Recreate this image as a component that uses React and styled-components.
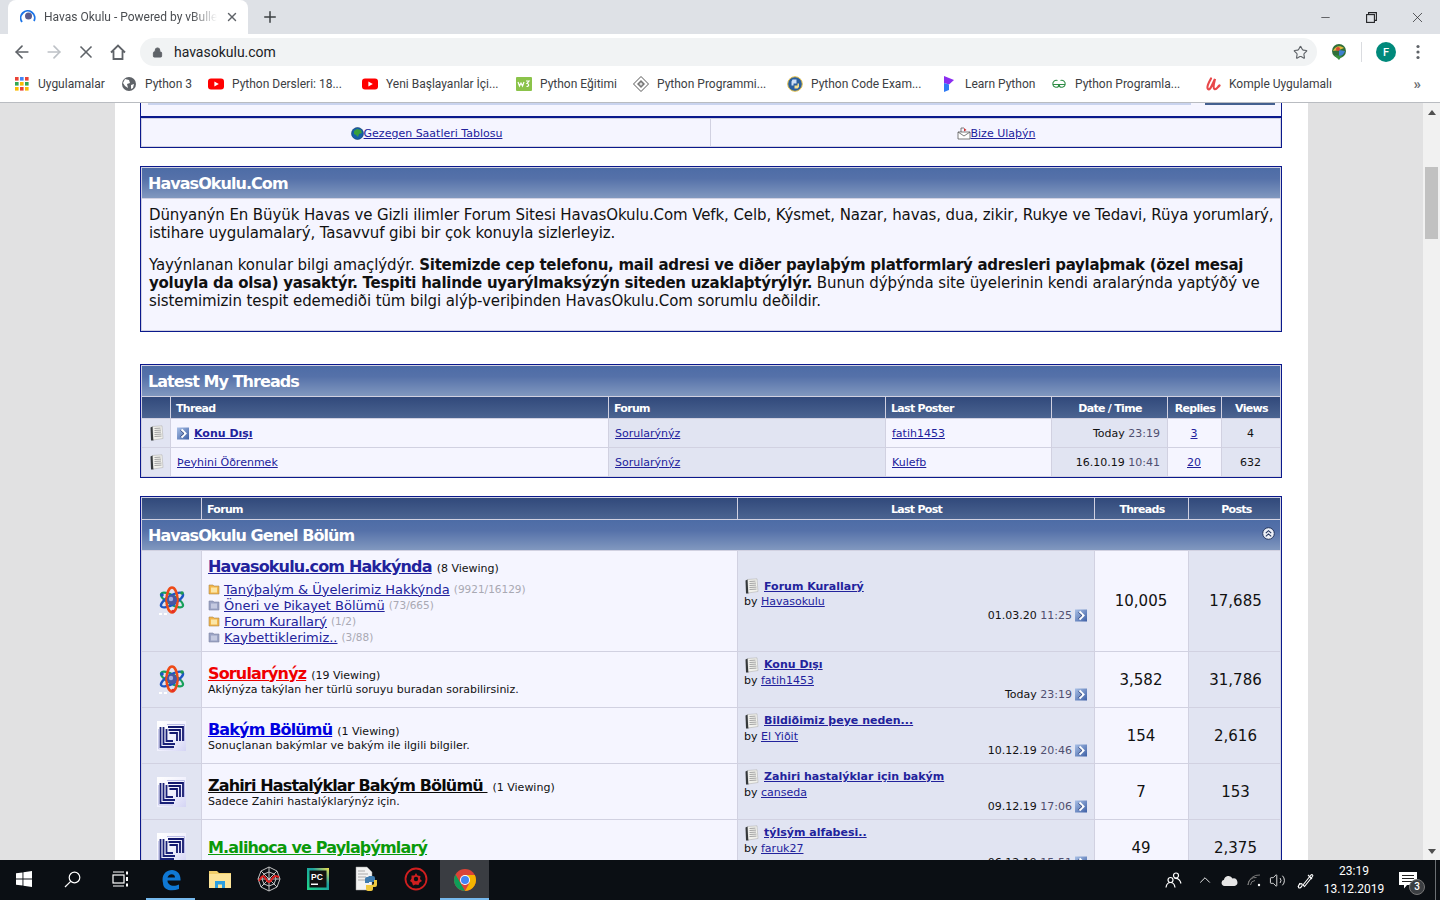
import React from 'react';
import styled, { createGlobalStyle } from 'styled-components';
import { ArrowLeft, ArrowRight, X, Plus, Lock, Star, ChevronUp, Volume2, Minus } from 'lucide-react';

const GlobalStyle = createGlobalStyle`
    html, body {
        margin: 0;
        padding: 0;
        height: 100%;
        overflow: hidden;
    }
    * { box-sizing: border-box; }
`;

const Screen = styled.div`
    width: 1440px;
    height: 900px;
    display: flex;
    flex-direction: column;
    overflow: hidden;
    font-family: "DejaVu Sans", Verdana, sans-serif;
`;

/* browser chrome */
const TabStrip = styled.div`
    height: 34px;
    background: #dee1e6;
    display: flex;
    align-items: flex-end;
    padding-left: 8px;
    font-family: Roboto, sans-serif;
`;

const Tab = styled.div`
    width: 240px;
    height: 34px;
    background: #fff;
    border-radius: 8px 8px 0 0;
    display: flex;
    align-items: center;
    padding: 0 9px 0 12px;
    gap: 8px;
    font-size: 12px;
    color: #4a4d51;
`;

const TabTitle = styled.div`
    flex: 1;
    white-space: nowrap;
    overflow: hidden;
    mask-image: linear-gradient(to right, #000 85%, transparent);
`;

const NewTab = styled.div`
    width: 44px;
    height: 34px;
    display: flex;
    align-items: center;
    justify-content: center;
    color: #3c4043;
`;

const WindowButtons = styled.div`
    margin-left: auto;
    display: flex;
    height: 34px;
`;

const WindowButton = styled.div`
    width: 46px;
    height: 34px;
    display: flex;
    align-items: center;
    justify-content: center;
    color: #202124;
`;

const Toolbar = styled.div`
    height: 36px;
    background: #fff;
    display: flex;
    align-items: center;
    padding: 0 6px;
    font-family: Roboto, sans-serif;
`;

const NavIcon = styled.div`
    width: 32px;
    height: 32px;
    display: flex;
    align-items: center;
    justify-content: center;
    color: ${p => p.$off ? '#bdc1c6' : '#5f6368'};
`;

const Omnibox = styled.div`
    width: 1178px;
    height: 28px;
    margin-left: 6px;
    background: #f1f3f4;
    border-radius: 14px;
    display: flex;
    align-items: center;
    padding: 0 9px 0 12px;
    gap: 11px;
    font-size: 14px;
    color: #202124;
    margin-right: 6px;
`;

const Url = styled.div`
    flex: 1;
`;

const ToolDivider = styled.div`
    width: 1px;
    height: 20px;
    background: #dadce0;
    margin: 0 8px 0 6px;
`;

const Avatar = styled.div`
    width: 20px;
    height: 20px;
    border-radius: 50%;
    background: #00897b;
    color: #fff;
    font-size: 11px;
    font-weight: 500;
    display: flex;
    align-items: center;
    justify-content: center;
    margin: 0 6px;
`;

const Bookmarks = styled.div`
    height: 33px;
    background: #fff;
    border-bottom: 1px solid #b9bcc1;
    display: flex;
    align-items: center;
    padding: 0 14px 4px;
    font-family: Roboto, sans-serif;
    font-size: 12px;
    color: #3c4043;
`;

const Bookmark = styled.div`
    width: ${p => p.$w}px;
    flex: none;
    display: flex;
    align-items: center;
    gap: 8px;
    white-space: nowrap;
    overflow: hidden;
`;

const MoreBookmarks = styled.div`
    margin-left: auto;
    margin-right: 5px;
    font-size: 15px;
    color: #6a6d71;
    font-weight: 700;
`;

/* page area */
const Viewport = styled.div`
    flex: 1;
    min-height: 0;
    display: grid;
    grid-template-columns: 115px 1193px 115px 17px;
    background: #e1e1e2;
    overflow: hidden;
`;

const Wrapper = styled.div`
    grid-column: 2;
    background: #fff;
    padding: 0 26px 0 25px;
    overflow: hidden;
`;

const Scrollbar = styled.div`
    grid-column: 4;
    background: #f1f1f1;
    display: flex;
    flex-direction: column;
    align-items: center;
    height: 757px;
`;

const ScrollArrow = styled.div`
    width: 0;
    height: 0;
    border-left: 4px solid transparent;
    border-right: 4px solid transparent;
    ${p => p.$down
        ? 'border-top: 5px solid #505050; margin-top: auto; margin-bottom: 6px;'
        : 'border-bottom: 5px solid #505050; margin-top: 7px;'}
`;

const ScrollThumb = styled.div`
    width: 13px;
    height: 72px;
    margin-top: 52px;
    background: #c1c1c1;
`;

const TopFragment = styled.div`
    height: 13px;
    background: #f5f5ff;
    border-left: 1px solid #0b198c;
    border-right: 1px solid #0b198c;
    display: flex;
    justify-content: space-between;
    padding: 0 6px 0 7px;
`;

const CutInput = styled.div`
    width: 1043px;
    height: 2px;
    background: #c9d3ee;
`;

const CutButton = styled.div`
    width: 70px;
    height: 2px;
    background: #44608f;
`;

const NavBox = styled.div`
    display: grid;
    grid-template-columns: 568px 1fr;
    gap: 1px;
    padding: 1px;
    height: 32px;
    background: #d1d1e1;
    border: 1px solid #0b198c;
    border-top-width: 2px;
`;

const NavCell = styled.div`
    background: #f5f5ff;
    display: flex;
    align-items: center;
    justify-content: center;
    font-size: 11px;
    padding: 1px 0 0 1px;
`;

const Link = styled.a`
    color: ${p => p.$color || '#22229c'};
    text-decoration: underline;
    font-weight: ${p => p.$bold ? 700 : 400};
    font-size: ${p => p.$size ? p.$size + 'px' : 'inherit'};
    display: inline;
`;

const NavLink = styled(Link)`
    display: inline-flex;
    align-items: center;
`;

const Box = styled.div`
    display: grid;
    grid-template-columns: ${p => p.$cols};
    gap: 1px;
    padding: 1px;
    margin-top: ${p => p.$top}px;
    background: #d1d1e1;
    border: 1px solid #0b198c;
`;

const Title = styled.div`
    grid-column: 1 / -1;
    height: 30px;
    background: linear-gradient(#4d6ca6 0%, #5571a9 35%, #8198bf 100%);
    color: #fff;
    font-weight: 700;
    font-size: 16px;
    letter-spacing: -0.95px;
    display: flex;
    align-items: center;
    justify-content: space-between;
    padding: 0 6px 0 6px;
`;

const CollapseIcon = styled.div`
    width: 13px;
    height: 13px;
    margin-top: -4px;
    margin-right: -1px;
    display: flex;
`;

const InfoBody = styled.div`
    grid-column: 1 / -1;
    height: 131px;
    background: #f5f5ff;
    padding: 7px 6px 0 7px;
    font-size: 15px;
    line-height: 18px;
    letter-spacing: -0.1px;
    color: #111;
    p { margin: 0 0 14px; }
    b { letter-spacing: -0.27px; }
`;

const Head = styled.div`
    height: 21px;
    background: linear-gradient(#31497b, #4b6491);
    color: #fff;
    font-size: 11px;
    font-weight: 700;
    letter-spacing: -0.7px;
    display: flex;
    align-items: center;
    padding: 1px 4px 0 ${p => p.$nudge ? 8 : 5}px;
    justify-content: ${p => p.$center ? 'center' : 'flex-start'};
`;

const Cell = styled.div`
    height: ${p => p.$h}px;
    background: ${p => p.$alt ? '#e1e4f2' : '#f5f5ff'};
    font-size: ${p => p.$size || 11}px;
    color: ${p => p.$color || '#111'};
    display: flex;
    align-items: center;
    padding: 0 7px 0 ${p => p.$nudge ? 9 : 6}px;
    justify-content: ${p => p.$align || 'flex-start'};
    gap: 4px;
    white-space: nowrap;
    overflow: hidden;
`;

const IconCell = styled(Cell)`
    padding: 0;
    justify-content: center;
`;

const Time = styled.span`
    color: #4f4f70;
`;

const ForumInfo = styled.div`
    display: flex;
    flex-direction: column;
    white-space: nowrap;
    padding-top: 1px;
`;

const ForumHeading = styled.div`
    display: flex;
    align-items: baseline;
    gap: 5px;
    height: 18px;
    line-height: 18px;
`;

const ForumName = styled.a`
    color: ${p => p.$color};
    font-size: 16px;
    font-weight: 700;
    text-decoration: underline;
    letter-spacing: -0.85px;
    white-space: pre;
`;

const Viewing = styled.span`
    font-size: 11px;
    color: #111;
`;

const Description = styled.div`
    font-size: 11px;
    line-height: 12px;
    margin-top: 1px;
    color: #111;
`;

const SubList = styled.div`
    display: flex;
    flex-direction: column;
    margin-top: 5px;
`;

const SubForum = styled.div`
    display: flex;
    align-items: center;
    height: 16px;
    gap: 4px;
`;

const Counts = styled.span`
    color: #a9a9b3;
    font-size: 10.5px;
`;

const LastPostInfo = styled.div`
    width: 100%;
    display: flex;
    flex-direction: column;
    font-size: 11px;
`;

const LastTitle = styled.div`
    display: flex;
    align-items: center;
    gap: 5px;
    height: 16px;
`;

const LastBy = styled.div`
    height: 15px;
    line-height: 16px;
`;

const LastDate = styled.div`
    align-self: flex-end;
    display: flex;
    align-items: center;
    gap: 3px;
    height: 13px;
    margin-bottom: 2px;
    margin-right: -1px;
`;

/* taskbar */
const Taskbar = styled.div`
    height: 40px;
    background: #0b0f14;
    display: flex;
    align-items: stretch;
    color: #fff;
    font-family: Roboto, sans-serif;
`;

const TaskSlot = styled.div`
    width: ${p => p.$w || 48}px;
    display: flex;
    align-items: center;
    justify-content: center;
    background: ${p => p.$active ? '#3a3d42' : 'transparent'};
    border-bottom: 2px solid ${p => p.$open ? '#76b9ed' : 'transparent'};
    padding-top: ${p => p.$open ? 2 : 0}px;
`;

const PinnedGap = styled.div`
    width: 2px;
`;

const Tray = styled.div`
    margin-left: auto;
    display: flex;
    align-items: center;
`;

const TrayIcon = styled.div`
    width: ${p => p.$w}px;
    display: flex;
    align-items: center;
    justify-content: center;
`;

const Clock = styled.div`
    width: 62px;
    text-align: center;
    font-size: 12px;
    line-height: 18px;
    margin-left: 1px;
`;

const Notification = styled.div`
    position: relative;
    width: 46px;
    display: flex;
    justify-content: center;
`;

const NotifyBadge = styled.div`
    position: absolute;
    right: 6px;
    top: 7px;
    width: 16px;
    height: 16px;
    border-radius: 50%;
    background: #3b3e42;
    border: 1px solid #777;
    font-size: 10px;
    font-weight: 500;
    display: flex;
    align-items: center;
    justify-content: center;
`;

const DesktopPeek = styled.div`
    align-self: stretch;
    width: 5px;
    border-left: 1px solid #6b6f73;
    margin-left: 4px;
`;

/* drawings */
const PaperIcon = ({ size = 15 }) => (
    <svg width={size} height={size + 1} viewBox="0 0 15 16" style={{ flex: 'none' }}>
        <path d="M3.500 1.500L13 .8l1 12.700-10 1.500z" fill="#f1f1ec" stroke="#b4b4b4" strokeWidth=".6" />
        <path d="M1.500 2.500L3.500 1.500 4.200 14 4.500 15.500 2 15.500z" fill="#34383a" />
        <path d="M5.500 3.500l6-.4M5.500 5.500l6.500-.4M5.500 7.500l6.500-.4M5.500 9.500l7-.4M5.500 11.500l7-.4" stroke="#a4a4a4" strokeWidth="1" />
    </svg>
);

const GoArrow = () => (
    <svg width="13" height="13" viewBox="0 0 13 13" style={{ flex: 'none' }}>
        <defs>
            <linearGradient id="goFill" x1="0" y1="0" x2="1" y2="1">
                <stop offset="0" stopColor="#a9c0e6" />
                <stop offset="1" stopColor="#3d5fa5" />
            </linearGradient>
        </defs>
        <rect width="12" height="12" y=".5" fill="url(#goFill)" />
        <path d="M4.500 2.500L8.500 6.500 4.500 10.500" fill="none" stroke="#fff" strokeWidth="2" />
        <path d="M3.400 3.400L7 6.500 3.400 9.600" fill="none" stroke="#1b2d63" strokeWidth=".7" />
    </svg>
);

const Atom = () => (
    <svg width="28" height="30" viewBox="0 0 28 30">
        <ellipse cx="14" cy="14" rx="12.500" ry="4.500" fill="none" stroke="#17a05a" strokeWidth="2.200" transform="rotate(30 14 14)" />
        <ellipse cx="14" cy="14" rx="12.500" ry="4.500" fill="none" stroke="#1c55c4" strokeWidth="2.400" transform="rotate(-30 14 14)" />
        <ellipse cx="14" cy="14" rx="5.500" ry="12.500" fill="none" stroke="#ee4a17" strokeWidth="2.600" />
        <circle cx="14" cy="14" r="5" fill="#4a57a3" />
        <circle cx="13" cy="13" r="2.200" fill="#a4aee0" />
        <circle cx="15" cy="25.500" r="1.800" fill="#e53027" />
        <circle cx="24" cy="7" r="1.800" fill="#1d9a4f" />
        <circle cx="4" cy="9" r="1.800" fill="#1c55c4" />
        <path d="M1 28h3M6 28h3" stroke="#fff" strokeWidth="2" />
    </svg>
);

const Brackets = () => (
    <svg width="29" height="30" viewBox="0 0 29 30">
        <defs>
            <linearGradient id="brk" x1="0" y1="0" x2="1" y2="1">
                <stop offset="0" stopColor="#ffffff" />
                <stop offset=".55" stopColor="#f0f0fd" />
                <stop offset="1" stopColor="#d4d4f4" />
            </linearGradient>
        </defs>
        <rect width="29" height="30" fill="url(#brk)" />
        <path d="M10 3.500h17.500V20" fill="none" stroke="#b9bbe6" strokeWidth="1" />
        <path d="M11 6h15v14M11.500 9h11.500v11M12.500 12h7.500v8" fill="none" stroke="#13186e" strokeWidth="1.800" />
        <path d="M3.500 6v20H17M6.500 6v17H18M9.500 8v12H16" fill="none" stroke="#1a2078" strokeWidth="1.800" />
        <path d="M1.500 8v20H16" fill="none" stroke="#c9caec" strokeWidth="1" />
    </svg>
);

const Folder = ({ on }) => (
    <svg width="12" height="12" viewBox="0 0 12 12" style={{ flex: 'none' }}>
        <path d="M1 2h4l1 1h5v8H1z" fill={on ? '#f3b64a' : '#9ba3c4'} stroke={on ? '#a8874f' : '#7f86a6'} strokeWidth=".6" />
        <rect x="3" y="4.500" width="6" height="5" fill={on ? '#fbe6a8' : '#c4c9e0'} />
    </svg>
);

const Globe = () => (
    <svg width="13" height="13" viewBox="0 0 13 13" style={{ flex: 'none' }}>
        <circle cx="6.500" cy="6.500" r="6" fill="#1660a8" stroke="#103b6a" strokeWidth=".6" />
        <path d="M3 4l3-2 4 1 1 3-3 1-1 3-2-2-2-1z" fill="#3aa03c" />
    </svg>
);

const MailIcon = () => (
    <svg width="14" height="13" viewBox="0 0 14 13" style={{ flex: 'none' }}>
        <path d="M1 5h12v7H1z" fill="#fff" stroke="#5a5a5a" strokeWidth=".8" />
        <path d="M1 5l6 4 6-4M4 5V1h3" fill="none" stroke="#5a5a5a" strokeWidth=".8" />
        <path d="M7 1l2.500 2L7 4.500z" fill="#c33" />
    </svg>
);

const Home = () => (
    <svg width="18" height="18" viewBox="0 0 18 18" fill="none" stroke="#5f6368" strokeWidth="1.800">
        <path d="M2 9.500L9 2.500l7 7M4.500 8v8h9V8" />
    </svg>
);

const Restore = () => (
    <svg width="11" height="11" viewBox="0 0 11 11" fill="none" stroke="#202124" strokeWidth="1.100">
        <rect x=".6" y="2.600" width="7.800" height="7.800" />
        <path d="M2.600 2.500V.6h7.800v7.800H8.500" />
    </svg>
);

const TabIcon = () => (
    <svg width="16" height="16" viewBox="0 0 16 16" fill="none">
        <path d="M2 13A7 7 0 1 1 14 12" stroke="#1a73e8" strokeWidth="1.800" />
        <circle cx="8.500" cy="7" r="3.500" fill="#5b5b8c" />
    </svg>
);

const Apps = () => (
    <svg width="16" height="16" viewBox="0 0 16 16">
        {[[1, 1, '#ea4335'], [6, 1, '#4285f4'], [11, 1, '#ea4335'], [1, 6, '#34a853'], [6, 6, '#fbbc05'], [11, 6, '#34a853'], [1, 11, '#fbbc05'], [6, 11, '#ea4335'], [11, 11, '#fbbc05']].map(([x, y, c]) => (
            <rect key={x + '-' + y} x={x} y={y} width="3.600" height="3.600" fill={c} />
        ))}
    </svg>
);

const WebFav = () => (
    <svg width="16" height="16" viewBox="0 0 16 16">
        <circle cx="8" cy="8" r="7" fill="#5f6368" />
        <path d="M4 3l4 1 1 3-3 1 1 4-3-2-2-3zM10 9l3-1-1 4-2 1z" fill="#fff" />
    </svg>
);

const YouTube = () => (
    <svg width="16" height="16" viewBox="0 0 16 16">
        <rect y="2.500" width="16" height="11" rx="3" fill="#f00" />
        <path d="M6.400 5.400L10.800 8l-4.400 2.600z" fill="#fff" />
    </svg>
);

const W3 = () => (
    <svg width="16" height="16" viewBox="0 0 16 16">
        <rect y="1" width="16" height="14" rx="1" fill="#8bc34a" />
        <path d="M2 6l1.500 4L5 7l1.500 3L8 6M10 5h3l-2 2.500c2 0 2.500 3-.5 3" fill="none" stroke="#fff" strokeWidth="1.200" />
    </svg>
);

const Diamond = () => (
    <svg width="16" height="16" viewBox="0 0 16 16">
        <path d="M8 .5L15.500 8 8 15.500.5 8z" fill="#fff" stroke="#555" />
        <path d="M8 4l4 4-4 4-4-4z" fill="#777" />
        <circle cx="8" cy="8" r="1.500" fill="#ddd" />
    </svg>
);

const CodeFav = () => (
    <svg width="16" height="16" viewBox="0 0 16 16">
        <circle cx="8" cy="8" r="7.300" fill="#2b5f9e" stroke="#e7c24a" strokeWidth="1" />
        <path d="M5.500 3.500h4v4h-3v2h-2v-4z" fill="#cfe0f5" />
        <path d="M10.500 12.500h-3v-3h3v-2h1.500v3.500z" fill="#f5e08e" />
    </svg>
);

const LearnFav = () => (
    <svg width="16" height="18" viewBox="0 0 16 18">
        <path d="M3 1l10 4-5 4.500-5-1.500z" fill="#8b2df0" />
        <path d="M3 8l5 1.500V15l-5 2z" fill="#2f7bf5" />
    </svg>
);

const GgFav = () => (
    <svg width="16" height="12" viewBox="0 0 16 12" fill="none" stroke="#2f8d46" strokeWidth="1.100">
        <path d="M1.500 6.500H7.500V8.500A3.500 3.500 0 1 1 6.500 2.500M14.500 6.500H8.500V8.500A3.500 3.500 0 1 0 9.500 2.500" />
    </svg>
);

const UFav = () => (
    <svg width="16" height="16" viewBox="0 0 16 16" fill="none" stroke="#e8484a" strokeWidth="2.200" strokeLinecap="round">
        <path d="M6 2.500C4 6 1 11 3 13S7 9 10 3C9 7 7.500 12 9.500 13s3-2 5-3.500" />
    </svg>
);

const ExtensionIcon = () => (
    <svg width="18" height="18" viewBox="0 0 18 18">
        <circle cx="9" cy="8" r="7" fill="#2f6f3a" />
        <path d="M3 8c2-5 7-6 11-3L9 7z" fill="#e2b93c" />
        <path d="M9 7l6 1c-1 3-3 5-6 5z" fill="#3e7fd0" />
        <path d="M4 12l5 5 3-4z" fill="#37923f" />
        <circle cx="8" cy="6" r="2" fill="#d64a35" />
    </svg>
);

const Kebab = () => (
    <svg width="4" height="16" viewBox="0 0 4 16" fill="#5f6368">
        <circle cx="2" cy="2.500" r="1.600" />
        <circle cx="2" cy="8" r="1.600" />
        <circle cx="2" cy="13.500" r="1.600" />
    </svg>
);

const Collapse = () => (
    <svg width="13" height="13" viewBox="0 0 13 13" fill="none">
        <circle cx="6.500" cy="6.500" r="5.800" fill="#eef1f8" stroke="#24365e" />
        <path d="M3.800 6.200l2.700-2.500 2.700 2.500M3.800 9.400l2.700-2.500 2.700 2.500" stroke="#24365e" strokeWidth="1.100" />
    </svg>
);

const WinLogo = () => (
    <svg width="16" height="16" viewBox="0 0 16 16" fill="#fff">
        <path d="M0 2.300L6.500 1.400v6.200H0zM7.400 1.300L16 0v7.600H7.400zM0 8.400h6.500v6.200L0 13.700zM7.400 8.400H16V16l-8.600-1.300z" />
    </svg>
);

const SearchGlyph = () => (
    <svg width="17" height="17" viewBox="0 0 17 17" fill="none" stroke="#fff" strokeWidth="1.200">
        <circle cx="10.500" cy="6.500" r="5.300" />
        <path d="M6.700 10.300L1 16" />
    </svg>
);

const TaskView = () => (
    <svg width="17" height="16" viewBox="0 0 17 16" fill="none" stroke="#fff" strokeWidth="1.200">
        <rect x="1" y="4" width="11" height="8" />
        <path d="M1 1h11M1 15h11" />
        <path d="M15 .5v3M15 6v4M15 12.500v3" strokeWidth="2" />
    </svg>
);

const EdgeLogo = () => (
    <svg width="20" height="22" viewBox="0 0 20 22" fill="none">
        <path d="M2 14C0 6 5 1 11 1c5 0 9 4 8.500 10.500H6.500C6.500 16 12 18.500 18 15.500v4.500C10 23 2 21 2 14z" fill="#0f78d4" />
        <path d="M6.500 8.500h7.500C14 4.500 8 4 6.500 8.500z" fill="#0b0f14" />
    </svg>
);

const FolderLogo = () => (
    <svg width="22" height="20" viewBox="0 0 22 20">
        <path d="M0 2h8l2 2h12v15H0z" fill="#f2cf6a" />
        <rect y="5" width="22" height="14" fill="#fde498" />
        <path d="M6 19v-7h10v7h-3v-3.500H9V19z" fill="#2d9fe0" />
    </svg>
);

const SpiderLogo = () => (
    <svg width="24" height="26" viewBox="0 0 24 26" fill="none" stroke="#c4c4c4" strokeWidth="1">
        <path d="M12 1l8 4 3 8-3 8-8 4-8-4-3-8 3-8zM12 1v24M1 13h22M4 5l16 16M20 5L4 21M12 6l5 2 2 5-2 5-5 2-5-2-2-5 2-5z" />
        <path d="M2 15c3-6 5-6 7-2s4 4 6 0 4-3 7-2" stroke="#e02020" strokeWidth="2" />
    </svg>
);

const PyCharmLogo = () => (
    <svg width="22" height="22" viewBox="0 0 22 22">
        <defs>
            <linearGradient id="pcEdge" x1="0" y1="1" x2="1" y2="0">
                <stop offset="0" stopColor="#21d789" />
                <stop offset=".6" stopColor="#19a0a0" />
                <stop offset="1" stopColor="#f4e04d" />
            </linearGradient>
        </defs>
        <rect width="22" height="22" fill="url(#pcEdge)" />
        <rect x="2.500" y="2.500" width="17" height="17" fill="#111" />
        <text x="4" y="11.500" fontFamily="Liberation Sans" fontSize="8.500" fontWeight="700" fill="#fff">PC</text>
        <rect x="4" y="15.500" width="7" height="1.500" fill="#fff" />
    </svg>
);

const PythonFileLogo = () => (
    <svg width="24" height="26" viewBox="0 0 24 26">
        <path d="M1 1h11l5 5v18H1z" fill="#f2f2f2" stroke="#999" strokeWidth=".5" />
        <path d="M3 5h7M3 8h10M3 11h8M3 14h7" stroke="#aaa" strokeWidth="1" />
        <path d="M13 10h5a2 2 0 0 1 2 2v4h-6v1h-4v-4a2 2 0 0 1 2-2h2z" fill="#3f7cb0" />
        <path d="M22 14v5a2 2 0 0 1-2 2h-2v2a2 2 0 0 1-2 2h-3a2 2 0 0 1-2-2v-4h6a2 2 0 0 0 2-2v-3z" fill="#f0c93e" />
    </svg>
);

const RedCircleLogo = () => (
    <svg width="24" height="24" viewBox="0 0 24 24" fill="none" stroke="#d01f1f">
        <circle cx="12" cy="12" r="10.500" strokeWidth="1.800" />
        <path d="M12 6l1.500 2.500 3 .5-.5 3 2 2-2.500 1.500-1 2.500-3-.5-2.500 1-1-3-2-1.500 1.500-2.500 0-3 3 0z" fill="#d01f1f" stroke="none" />
        <circle cx="12" cy="12" r="2.200" fill="#0b0f14" stroke="none" />
    </svg>
);

const ChromeLogo = () => (
    <svg width="22" height="22" viewBox="0 0 22 22">
        <circle cx="11" cy="11" r="11" fill="#db4437" />
        <path d="M1.500 5.500L7 15l4 7A11 11 0 0 1 1.500 5.500z" fill="#0f9d58" />
        <path d="M11 6h9.800A11 11 0 0 1 11 22l4.500-8z" fill="#f4b400" />
        <circle cx="11" cy="11" r="5" fill="#fff" />
        <circle cx="11" cy="11" r="4" fill="#4285f4" />
    </svg>
);

const PeopleGlyph = () => (
    <svg width="17" height="16" viewBox="0 0 17 16" fill="none" stroke="#fff" strokeWidth="1.200">
        <circle cx="5.500" cy="8" r="2.500" />
        <path d="M1 15.500c.5-3.500 2.500-5 4.500-5s4 1.500 4.500 5" />
        <circle cx="11" cy="3.500" r="2.500" />
        <path d="M9.500 6.500c3-.5 5.500 1 6.500 5" />
    </svg>
);

const CloudGlyph = () => (
    <svg width="17" height="11" viewBox="0 0 17 11" fill="#e6e6e6">
        <path d="M3.500 11A3.200 3.200 0 0 1 3 4.700 4.500 4.500 0 0 1 11.500 3.500 3.800 3.800 0 0 1 13.500 11z" />
    </svg>
);

const WifiGlyph = () => (
    <svg width="14" height="14" viewBox="0 0 14 14" fill="none" stroke="#7a7a7a" strokeWidth="1">
        <path d="M1 12A11 11 0 0 1 13 2M1 12A7.500 7.500 0 0 1 9.500 4.500M3.500 12A5 5 0 0 1 8 7.500" />
        <circle cx="12" cy="12" r="1.200" fill="#fff" stroke="none" />
    </svg>
);

const PenGlyph = () => (
    <svg width="17" height="17" viewBox="0 0 17 17" fill="none" stroke="#fff" strokeWidth="1.100">
        <path d="M6 13l8-10c1-1 2.500 0 1.500 1.500L7.500 14.500z" />
        <path d="M1 15c1-3 3-4 4-3s-1 4-2.500 4S1 14 3 11" />
        <path d="M11 3l4 4" />
    </svg>
);

const MessageGlyph = () => (
    <svg width="18" height="17" viewBox="0 0 18 17">
        <path d="M0 0h18v13H8l-3 3.500V13H0z" fill="#fff" />
        <path d="M3 3.500h12M3 6.500h12M3 9.500h12" stroke="#222" strokeWidth="1" />
    </svg>
);

const bookmarks = [
    { w: 107, icon: <Apps />, label: 'Uygulamalar' },
    { w: 87, icon: <WebFav />, label: 'Python 3' },
    { w: 154, icon: <YouTube />, label: 'Python Dersleri: 18...' },
    { w: 154, icon: <YouTube />, label: 'Yeni Başlayanlar İçi...' },
    { w: 117, icon: <W3 />, label: 'Python Eğitimi' },
    { w: 154, icon: <Diamond />, label: 'Python Programmi...' },
    { w: 154, icon: <CodeFav />, label: 'Python Code Exam...' },
    { w: 110, icon: <LearnFav />, label: 'Learn Python' },
    { w: 154, icon: <GgFav />, label: 'Python Programla...' },
    { w: 130, icon: <UFav />, label: 'Komple Uygulamalı' },
];

const forums = [
    {
        h: 100, icon: <Atom />, name: 'Havasokulu.com Hakkýnda', color: '#22229c', viewing: '(8 Viewing)',
        subs: [
            { on: true, name: 'Tanýþalým & Üyelerimiz Hakkýnda', count: '(9921/16129)' },
            { on: false, name: 'Öneri ve Þikayet Bölümü', count: '(73/665)' },
            { on: true, name: 'Forum Kurallarý', count: '(1/2)' },
            { on: false, name: 'Kaybettiklerimiz..', count: '(3/88)' },
        ],
        last: 'Forum Kurallarý', by: 'Havasokulu', date: '01.03.20', time: '11:25', threads: '10,005', posts: '17,685',
    },
    {
        h: 55, icon: <Atom />, name: 'Sorularýnýz', color: '#f00000', viewing: '(19 Viewing)',
        desc: 'Aklýnýza takýlan her türlü soruyu buradan sorabilirsiniz.',
        last: 'Konu Dışı', by: 'fatih1453', date: 'Today', time: '23:19', threads: '3,582', posts: '31,786',
    },
    {
        h: 55, icon: <Brackets />, name: 'Bakým Bölümü', color: '#0000e0', viewing: '(1 Viewing)',
        desc: 'Sonuçlanan bakýmlar ve bakým ile ilgili bilgiler.',
        last: 'Bildiðimiz þeye neden...', by: 'El Yiðit', date: '10.12.19', time: '20:46', threads: '154', posts: '2,616',
    },
    {
        h: 55, icon: <Brackets />, name: 'Zahiri Hastalýklar Bakým Bölümü ', color: '#0a0a0a', viewing: '(1 Viewing)',
        desc: 'Sadece Zahiri hastalýklarýnýz için.',
        last: 'Zahiri hastalýklar için bakým', by: 'canseda', date: '09.12.19', time: '17:06', threads: '7', posts: '153',
    },
    {
        h: 55, icon: <Brackets />, name: 'M.alihoca ve Paylaþýmlarý', color: '#0a9a0a', viewing: '',
        last: 'týlsým alfabesi..', by: 'faruk27', date: '06.12.19', time: '15:51', threads: '49', posts: '2,375',
    },
];

function ForumRow({ forum }) {
    return (
        <>
            <IconCell $h={forum.h} $alt>{forum.icon}</IconCell>
            <Cell $h={forum.h}>
                <ForumInfo>
                    <ForumHeading>
                        <ForumName $color={forum.color}>{forum.name}</ForumName>
                        <Viewing>{forum.viewing}</Viewing>
                    </ForumHeading>
                    {forum.desc && <Description>{forum.desc}</Description>}
                    {forum.subs && (
                        <SubList>
                            {forum.subs.map(sub => (
                                <SubForum key={sub.name}>
                                    <Folder on={sub.on} />
                                    <Link $size={13}>{sub.name}</Link>
                                    <Counts>{sub.count}</Counts>
                                </SubForum>
                            ))}
                        </SubList>
                    )}
                </ForumInfo>
            </Cell>
            <Cell $h={forum.h} $alt>
                <LastPostInfo>
                    <LastTitle>
                        <PaperIcon />
                        <Link $bold>{forum.last}</Link>
                    </LastTitle>
                    <LastBy>by <Link>{forum.by}</Link></LastBy>
                    <LastDate>
                        <span>{forum.date} <Time>{forum.time}</Time></span>
                        <GoArrow />
                    </LastDate>
                </LastPostInfo>
            </Cell>
            <Cell $h={forum.h} $size={15} $align="center">{forum.threads}</Cell>
            <Cell $h={forum.h} $size={15} $align="center" $alt $nudge>{forum.posts}</Cell>
        </>
    );
}

function App() {
    return (
        <Screen>
            <GlobalStyle />
            <TabStrip>
                <Tab>
                    <TabIcon />
                    <TabTitle>Havas Okulu - Powered by vBulletin</TabTitle>
                    <X size={14} strokeWidth={2.4} color="#5f6368" />
                </Tab>
                <NewTab><Plus size={18} strokeWidth={2} /></NewTab>
                <WindowButtons>
                    <WindowButton><Minus size={13} strokeWidth={1.2} /></WindowButton>
                    <WindowButton><Restore /></WindowButton>
                    <WindowButton><X size={17} strokeWidth={1} /></WindowButton>
                </WindowButtons>
            </TabStrip>
            <Toolbar>
                <NavIcon><ArrowLeft size={20} strokeWidth={2} /></NavIcon>
                <NavIcon $off><ArrowRight size={20} strokeWidth={2} /></NavIcon>
                <NavIcon><X size={20} strokeWidth={2} /></NavIcon>
                <NavIcon><Home /></NavIcon>
                <Omnibox>
                    <Lock size={11} fill="#5f6368" color="#5f6368" />
                    <Url>havasokulu.com</Url>
                    <Star size={15} color="#5f6368" strokeWidth={1.8} />
                </Omnibox>
                <NavIcon><ExtensionIcon /></NavIcon>
                <ToolDivider />
                <Avatar>F</Avatar>
                <NavIcon><Kebab /></NavIcon>
            </Toolbar>
            <Bookmarks>
                {bookmarks.map(b => (
                    <Bookmark key={b.label} $w={b.w}>{b.icon}{b.label}</Bookmark>
                ))}
                <MoreBookmarks>»</MoreBookmarks>
            </Bookmarks>

            <Viewport>
                <Wrapper>
                    <TopFragment>
                        <CutInput />
                        <CutButton />
                    </TopFragment>
                    <NavBox>
                        <NavCell><NavLink><Globe />Gezegen Saatleri Tablosu</NavLink></NavCell>
                        <NavCell><NavLink><MailIcon />Bize Ulaþýn</NavLink></NavCell>
                    </NavBox>

                    <Box $cols="1fr" $top={18}>
                        <Title>HavasOkulu.Com</Title>
                        <InfoBody>
                            <p>Dünyanýn En Büyük Havas ve Gizli ilimler Forum Sitesi HavasOkulu.Com Vefk, Celb, Kýsmet, Nazar, havas, dua, zikir, Rukye ve Tedavi, Rüya yorumlarý, istihare uygulamalarý, Tasavvuf gibi bir çok konuyla sizlerleyiz.</p>
                            <p>Yayýnlanan konular bilgi amaçlýdýr. <b>Sitemizde cep telefonu, mail adresi ve diðer paylaþým platformlarý adresleri paylaþmak (özel mesaj yoluyla da olsa) yasaktýr. Tespiti halinde uyarýlmaksýzýn siteden uzaklaþtýrýlýr.</b> Bunun dýþýnda site üyelerinin kendi aralarýnda yaptýðý ve sistemimizin tespit edemediði tüm bilgi alýþ-veriþinden HavasOkulu.Com sorumlu deðildir.</p>
                        </InfoBody>
                    </Box>

                    <Box $cols="28px 437px 276px 165px 115px 53px 58px" $top={32}>
                        <Title>Latest My Threads</Title>
                        <Head />
                        <Head>Thread</Head>
                        <Head>Forum</Head>
                        <Head>Last Poster</Head>
                        <Head $center>Date / Time</Head>
                        <Head $center>Replies</Head>
                        <Head $center>Views</Head>

                        <IconCell $h={28} $alt><PaperIcon /></IconCell>
                        <Cell $h={28}><GoArrow /><Link $bold>Konu Dışı</Link></Cell>
                        <Cell $h={28} $alt><Link>Sorularýnýz</Link></Cell>
                        <Cell $h={28}><Link>fatih1453</Link></Cell>
                        <Cell $h={28} $alt $align="flex-end"><span>Today <Time>23:19</Time></span></Cell>
                        <Cell $h={28} $align="center"><Link>3</Link></Cell>
                        <Cell $h={28} $alt $align="center">4</Cell>

                        <IconCell $h={28} $alt><PaperIcon /></IconCell>
                        <Cell $h={28}><Link>Þeyhini Öðrenmek</Link></Cell>
                        <Cell $h={28} $alt><Link>Sorularýnýz</Link></Cell>
                        <Cell $h={28}><Link>Kulefb</Link></Cell>
                        <Cell $h={28} $alt $align="flex-end"><span>16.10.19 <Time>10:41</Time></span></Cell>
                        <Cell $h={28} $align="center"><Link>20</Link></Cell>
                        <Cell $h={28} $alt $align="center">632</Cell>
                    </Box>

                    <Box $cols="59px 535px 356px 93px 91px" $top={18}>
                        <Head />
                        <Head>Forum</Head>
                        <Head $center>Last Post</Head>
                        <Head $center>Threads</Head>
                        <Head $center $nudge>Posts</Head>
                        <Title>
                            HavasOkulu Genel Bölüm
                            <CollapseIcon><Collapse /></CollapseIcon>
                        </Title>
                        {forums.map(f => <ForumRow key={f.name} forum={f} />)}
                    </Box>
                </Wrapper>
                <Scrollbar>
                    <ScrollArrow />
                    <ScrollThumb />
                    <ScrollArrow $down />
                </Scrollbar>
            </Viewport>

            <Taskbar>
                <TaskSlot><WinLogo /></TaskSlot>
                <TaskSlot><SearchGlyph /></TaskSlot>
                <TaskSlot><TaskView /></TaskSlot>
                <PinnedGap />
                <TaskSlot $w={49} $open><EdgeLogo /></TaskSlot>
                <TaskSlot $w={49}><FolderLogo /></TaskSlot>
                <TaskSlot $w={49}><SpiderLogo /></TaskSlot>
                <TaskSlot $w={49}><PyCharmLogo /></TaskSlot>
                <TaskSlot $w={49}><PythonFileLogo /></TaskSlot>
                <TaskSlot $w={49}><RedCircleLogo /></TaskSlot>
                <TaskSlot $w={49} $open $active><ChromeLogo /></TaskSlot>
                <Tray>
                    <TrayIcon $w={41}><PeopleGlyph /></TrayIcon>
                    <TrayIcon $w={22}><ChevronUp size={18} strokeWidth={1.2} /></TrayIcon>
                    <TrayIcon $w={26}><CloudGlyph /></TrayIcon>
                    <TrayIcon $w={24}><WifiGlyph /></TrayIcon>
                    <TrayIcon $w={22}><Volume2 size={17} strokeWidth={1.2} /></TrayIcon>
                    <TrayIcon $w={34}><PenGlyph /></TrayIcon>
                    <Clock>23:19<br />13.12.2019</Clock>
                    <Notification>
                        <MessageGlyph />
                        <NotifyBadge>3</NotifyBadge>
                    </Notification>
                    <DesktopPeek />
                </Tray>
            </Taskbar>
        </Screen>
    );
}

export default App;
